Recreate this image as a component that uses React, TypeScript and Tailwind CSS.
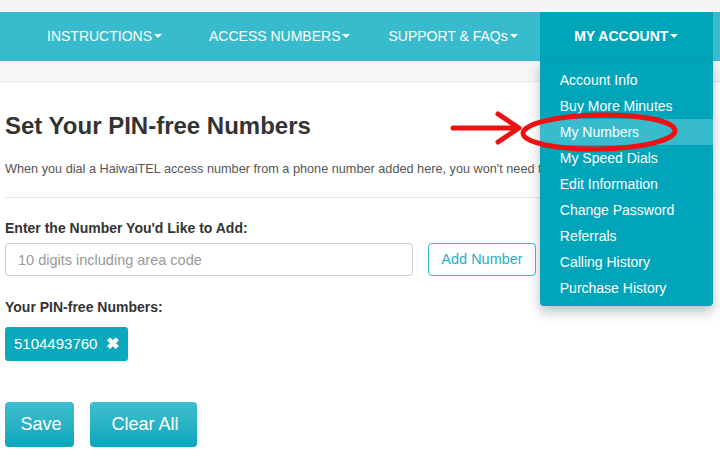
import React from 'react';

const navItems = [
  { label: 'INSTRUCTIONS', className: 'ml-[47px]' },
  { label: 'ACCESS NUMBERS', className: 'ml-[47px]' },
  { label: 'SUPPORT & FAQs', className: 'ml-[38px]' },
];

const accountLinks = [
  'Account Info',
  'Buy More Minutes',
  'My Numbers',
  'My Speed Dials',
  'Edit Information',
  'Change Password',
  'Referrals',
  'Calling History',
  'Purchase History',
];

const Caret = () => (
  <span className="inline-block ml-[2px] mb-[2px] w-0 h-0 border-l-[4px] border-r-[4px] border-t-[4px] border-l-transparent border-r-transparent border-t-white align-middle" />
);

export default function App() {
  return (
    <div
      className="relative w-[720px] h-[454px] overflow-hidden bg-white text-[#333]"
      style={{ fontFamily: '"Liberation Sans", Arial, sans-serif' }}
    >
      {/* top strip */}
      <div className="h-[12px] bg-[#f5f5f5]" />

      {/* nav bar */}
      <nav className="h-[49px] bg-[#38bbcc] flex items-stretch text-white text-[14px]">
        {navItems.map((item) => (
          <div key={item.label} className={`${item.className} flex items-center`}>
            <span>{item.label}</span>
            <Caret />
          </div>
        ))}
        <div className="relative ml-[22px] w-[173px] bg-[#00a5ba] flex items-center justify-center font-bold">
          <span>MY ACCOUNT</span>
          <Caret />

          {/* dropdown */}
          <ul className="absolute left-0 top-[49px] w-[173px] bg-[#00a5ba] rounded-b-[4px] shadow-[0_6px_12px_rgba(0,0,0,0.25)] pt-[6px] pb-[5px] font-normal z-10">
            {accountLinks.map((link) => (
              <li
                key={link}
                className={`h-[26px] flex items-center pl-[20px] text-[14px] ${
                  link === 'My Numbers' ? 'bg-[#38bbcc]' : ''
                }`}
              >
                {link}
              </li>
            ))}
          </ul>
        </div>
      </nav>

      {/* sub strip */}
      <div className="h-[21px] bg-[#f6f6f6] border-b border-[#e6e6e6]" />

      {/* content */}
      <main className="px-[5px]">
        <h1 className="mt-[30px] text-[24px] font-bold leading-[28px] text-[#333]">
          Set Your PIN-free Numbers
        </h1>
        <p className="mt-[21px] w-[535px] overflow-hidden text-[12.7px] leading-[16px] text-[#555] whitespace-nowrap">
          When you dial a HaiwaiTEL access number from a phone number added here, you won't need to enter your PIN.
        </p>
        <hr className="mt-[20px] border-0 border-t border-[#e5e5e5]" />

        <label className="block mt-[22px] text-[14px] font-bold leading-[17px]">
          Enter the Number You'd Like to Add:
        </label>
        <div className="mt-[6px] flex items-center gap-[15px]">
          <input
            placeholder="10 digits including area code"
            className="w-[408px] h-[33px] border border-[#ccc] rounded-[4px] px-[12px] text-[14.5px] placeholder:text-[#999] outline-none"
          />
          <button className="h-[33px] w-[108px] border border-[#38bbcc] rounded-[4px] text-[#2aaec6] text-[14.5px] bg-white">
            Add Number
          </button>
        </div>

        <label className="block mt-[23px] text-[14px] font-bold leading-[17px]">
          Your PIN-free Numbers:
        </label>
        <div className="mt-[11px]">
          <span className="inline-flex items-center h-[34px] px-[9px] bg-[#0ba9bd] text-white text-[15px] rounded-[3px]">
            5104493760
            <span className="ml-[9px] font-bold text-[16px]">✖</span>
          </span>
        </div>

        <div className="mt-[41px] flex gap-[16px]">
          <button className="h-[45px] w-[69px] rounded-[4px] bg-gradient-to-b from-[#3dbfcf] to-[#03a6bb] text-white text-[18px] pl-[3px]">
            Save
          </button>
          <button className="h-[45px] w-[107px] rounded-[4px] bg-gradient-to-b from-[#3dbfcf] to-[#03a6bb] text-white text-[18px] pl-[3px]">
            Clear All
          </button>
        </div>
      </main>

      {/* red annotation */}
      <svg
        className="absolute left-0 top-0 pointer-events-none z-20"
        width="720"
        height="454"
        viewBox="0 0 720 454"
      >
        <g stroke="#ee1111" strokeWidth="5" strokeLinecap="round" strokeLinejoin="round" fill="none">
          <line x1="453" y1="128" x2="516" y2="128" />
          <polyline points="498,114 519,128 498,142" />
          <ellipse cx="599" cy="132" rx="76" ry="17" transform="rotate(-1 599 132)" />
        </g>
      </svg>
    </div>
  );
}
